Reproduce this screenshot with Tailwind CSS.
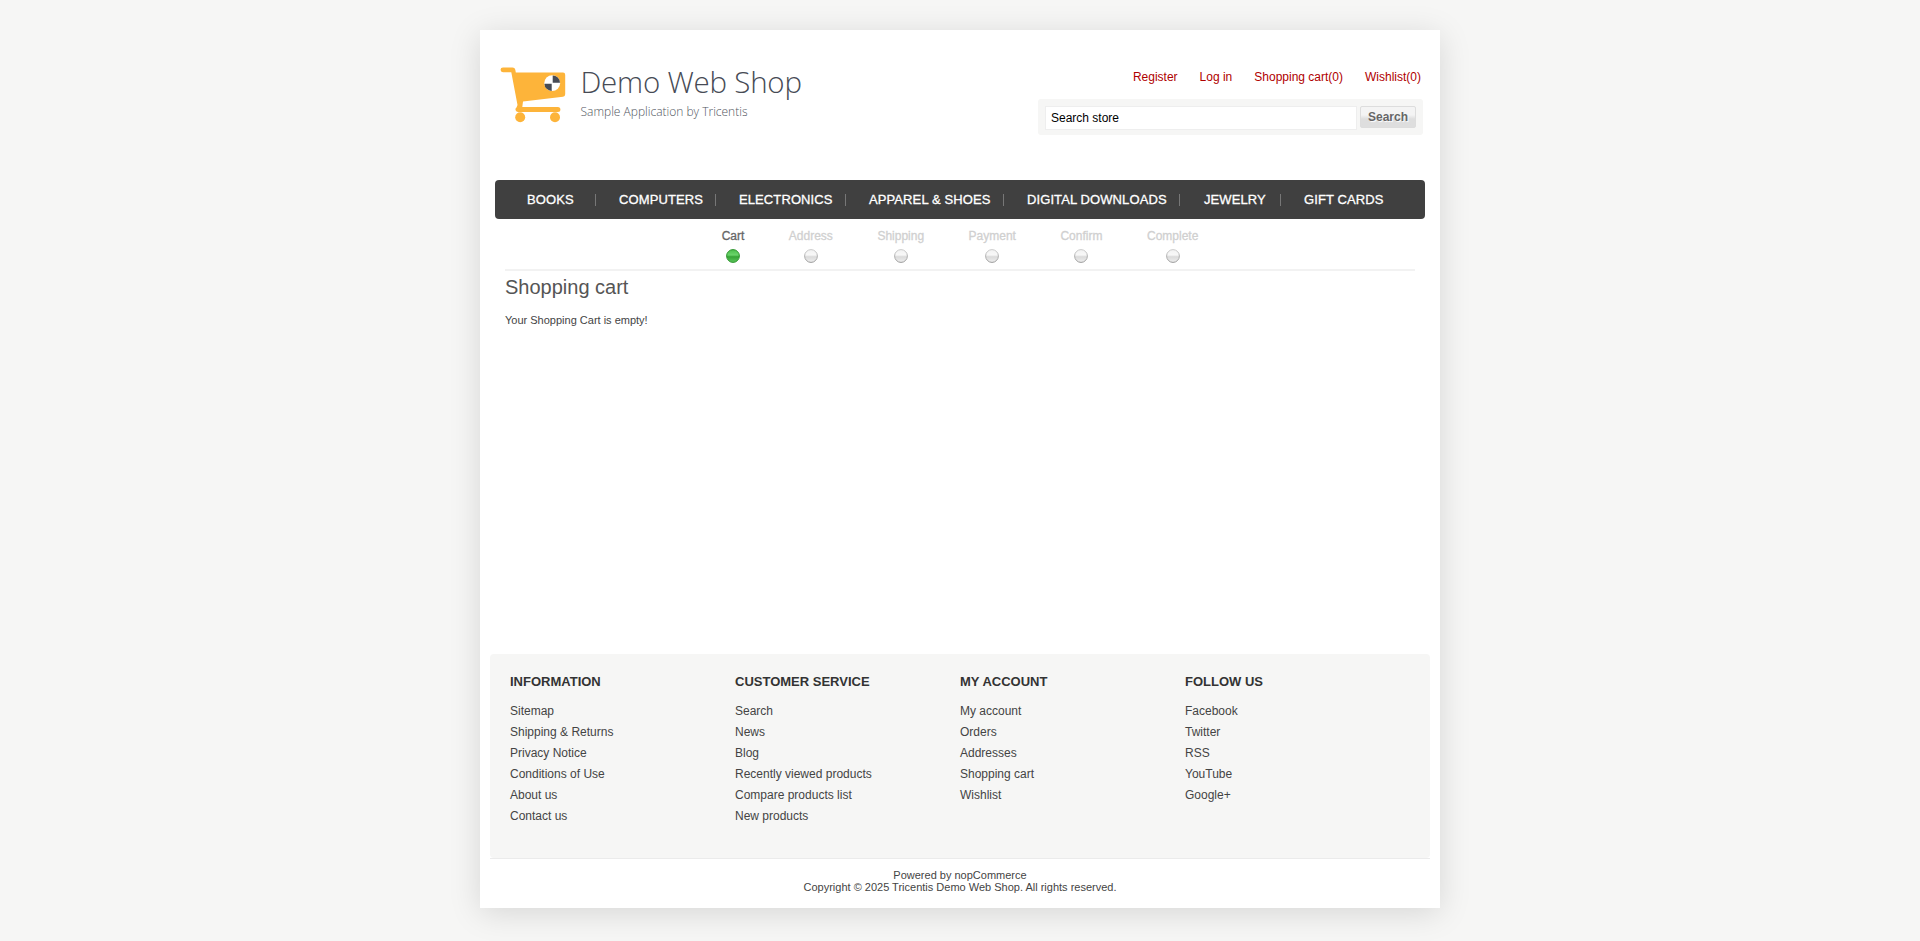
<!DOCTYPE html>
<html lang="en">
<head>
<meta charset="utf-8">
<title>Demo Web Shop. Shopping Cart</title>
<script src="https://cdn.jsdelivr.net/npm/@tailwindcss/browser@4"></script>
</head>
<body class="bg-[#f6f6f5] pt-[30px] h-[941px] overflow-hidden font-['Liberation_Sans',Arial,sans-serif] text-[#444]">
<div class="mx-auto w-[960px] h-[878px] bg-white shadow-[0_5px_30px_rgba(0,0,0,0.13)] flex flex-col">
  <header class="flex justify-between h-[150px] pl-5 pr-[17px]">
    <a class="block pt-[30px]">
      <svg width="310" height="70" viewBox="500 60 310 70">
        <g fill="#fdb43a">
          <path d="M503 67.4h9.5q2.4 0 2.8 2.4l.5 2.700H563q2.200 0 2.200 2.200v19.600q0 2.200-2.200 2.400l-40 4.800-.7 5.500h35.600a2.500 2.500 0 0 1 0 5H518a2.500 2.500 0 0 1-1.500-4.500l1-2.500L511.300 72.300H503a2.450 2.450 0 0 1 0-4.900z"/>
          <circle cx="520.200" cy="117.200" r="5"/><circle cx="555" cy="117.200" r="5"/>
        </g>
        <circle cx="552.200" cy="83.200" r="7.900" fill="#fff"/>
        <path d="M552.700 82.700v-7.300a7.600 7.600 0 0 1 7.300 7.300zM551.700 83.700v7.300a7.600 7.600 0 0 1-7.300-7.300z" fill="#474b55"/>
        <text x="580.500" y="93.200" textLength="221.500" class="font-['Open_Sans',sans-serif] font-light text-[29.500px] fill-[#474b55]">Demo Web Shop</text>
        <text x="580.500" y="116" textLength="167" class="font-['Open_Sans',sans-serif] font-light text-[12px] fill-[#51555e]">Sample Application by Tricentis</text>
      </svg>
    </a>
    <div class="w-[385px] pt-[39px]">
      <nav class="flex justify-end gap-[22px] pr-[2px] h-[30px] text-[12px] leading-4 text-[#b00000]">
        <a>Register</a><a>Log in</a><a>Shopping cart(0)</a><a>Wishlist(0)</a>
      </nav>
      <form class="flex items-start gap-[3px] h-9 bg-[#f6f6f5] rounded-[3px] pt-[7px] pl-[7px]">
        <div class="w-[312px] h-6 bg-white border border-[#eee] pl-[5px] text-[12px] leading-[23px] text-black">Search store</div>
        <div class="w-14 h-[22px] rounded-[2px] border border-[#ddd] bg-linear-to-b from-[#f4f4f4] from-40% to-[#dedede] to-60% text-center text-[12px] leading-[20px] font-bold text-[#666] [text-shadow:1px_1px_1px_#fff]">Search</div>
      </form>
    </div>
  </header>

  <nav class="mx-[15px] h-[39px] shrink-0 bg-[#404040] rounded-[4px] flex items-center text-[13px] tracking-[0.1px] [-webkit-text-stroke:0.3px_#fff] text-white pl-8">
    <a class="w-[68px]">BOOKS</a><i class="w-px h-3 bg-[#777] mr-[23px]"></i>
    <a class="w-[96px]">COMPUTERS</a><i class="w-px h-3 bg-[#777] mr-[23px]"></i>
    <a class="w-[106px]">ELECTRONICS</a><i class="w-px h-3 bg-[#777] mr-[23px]"></i>
    <a class="w-[134px] whitespace-nowrap">APPAREL &amp; SHOES</a><i class="w-px h-3 bg-[#777] mr-[23px]"></i>
    <a class="w-[152px] whitespace-nowrap">DIGITAL DOWNLOADS</a><i class="w-px h-3 bg-[#777] mr-6"></i>
    <a class="w-[76px]">JEWELRY</a><i class="w-px h-3 bg-[#777] mr-[23px]"></i>
    <a class="whitespace-nowrap">GIFT CARDS</a>
  </nav>

  <main class="mx-[25px] h-[435px] shrink-0">
    <ol class="flex justify-center gap-[44.5px] h-[52px] pt-[9px] border-b-2 border-[#f2f2f2] text-[12px] leading-4 text-[#d0d0d0] [-webkit-text-stroke:0.3px_currentColor]">
      <li class="flex flex-col items-center gap-[5px] text-[#666]">Cart<svg class="size-[14px]" viewBox="0 0 14 14"><use href="#ballOn"/></svg></li>
      <li class="flex flex-col items-center gap-[5px]">Address<svg class="size-[14px]" viewBox="0 0 14 14"><use href="#ballOff"/></svg></li>
      <li class="flex flex-col items-center gap-[5px]">Shipping<svg class="size-[14px]" viewBox="0 0 14 14"><use href="#ballOff"/></svg></li>
      <li class="flex flex-col items-center gap-[5px]">Payment<svg class="size-[14px]" viewBox="0 0 14 14"><use href="#ballOff"/></svg></li>
      <li class="flex flex-col items-center gap-[5px]">Confirm<svg class="size-[14px]" viewBox="0 0 14 14"><use href="#ballOff"/></svg></li>
      <li class="flex flex-col items-center gap-[5px]">Complete<svg class="size-[14px]" viewBox="0 0 14 14"><use href="#ballOff"/></svg></li>
    </ol>
    <h1 class="pt-1 text-[20px] leading-6 text-[#555]">Shopping cart</h1>
    <p class="pt-[13px] text-[11px] leading-4">Your Shopping Cart is empty!</p>
  </main>

  <footer>
    <div class="mx-[10px] border-b border-[#ebebeb]">
      <div class="h-[204px] rounded-[4px] bg-[#f6f6f5] grid grid-cols-[225px_225px_225px_225px] pl-5 pt-5 text-[12px] leading-[21px]">
        <div><h3 class="text-[13px] leading-4 font-bold text-[#333] mb-[11px]">INFORMATION</h3>
          <ul><li>Sitemap</li><li>Shipping &amp; Returns</li><li>Privacy Notice</li><li>Conditions of Use</li><li>About us</li><li>Contact us</li></ul></div>
        <div><h3 class="text-[13px] leading-4 font-bold text-[#333] mb-[11px]">CUSTOMER SERVICE</h3>
          <ul><li>Search</li><li>News</li><li>Blog</li><li>Recently viewed products</li><li>Compare products list</li><li>New products</li></ul></div>
        <div><h3 class="text-[13px] leading-4 font-bold text-[#333] mb-[11px]">MY ACCOUNT</h3>
          <ul><li>My account</li><li>Orders</li><li>Addresses</li><li>Shopping cart</li><li>Wishlist</li></ul></div>
        <div><h3 class="text-[13px] leading-4 font-bold text-[#333] mb-[11px]">FOLLOW US</h3>
          <ul><li>Facebook</li><li>Twitter</li><li>RSS</li><li>YouTube</li><li>Google+</li></ul></div>
      </div>
    </div>
    <p class="pt-[10px] text-center text-[11px] leading-3">Powered by nopCommerce<br>Copyright © 2025 Tricentis Demo Web Shop. All rights reserved.</p>
  </footer>
</div>
<svg class="absolute size-0">
  <defs>
    <linearGradient id="greenTop" x2="0" y2="1"><stop offset="0" stop-color="#4bbd4b"/><stop offset=".42" stop-color="#6ad46a"/><stop offset=".56" stop-color="#36a336"/><stop offset="1" stop-color="#5cc85c"/></linearGradient>
    <linearGradient id="greyTop" x2="0" y2="1"><stop offset="0" stop-color="#f2f2f2"/><stop offset=".42" stop-color="#f8f8f8"/><stop offset=".56" stop-color="#dadada"/><stop offset="1" stop-color="#efefef"/></linearGradient>
    <linearGradient id="greyRim" x2="0" y2="1"><stop offset="0" stop-color="#ccc"/><stop offset="1" stop-color="#999"/></linearGradient>
    <g id="ballOn"><circle cx="7" cy="7" r="6.400" fill="url(#greenTop)" stroke="#2f942f"/></g>
    <g id="ballOff"><circle cx="7" cy="7" r="6.400" fill="url(#greyTop)" stroke="url(#greyRim)"/></g>
  </defs>
</svg>
</body>
</html>
